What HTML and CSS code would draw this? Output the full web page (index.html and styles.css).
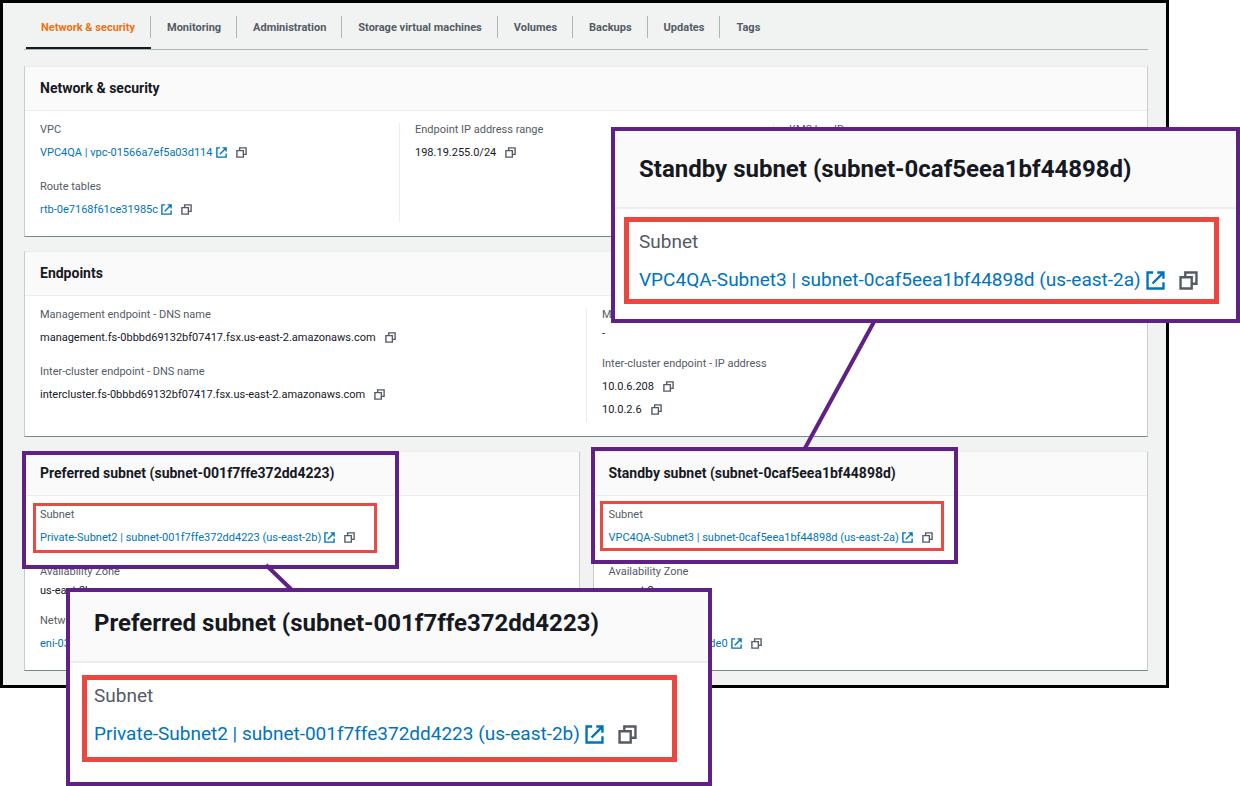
FILE: index.html
```html
<!DOCTYPE html>
<html lang="en">
<head>
<meta charset="utf-8">
<title>File system - Network &amp; security</title>
<link rel="stylesheet" href="styles.css">
</head>
<body>
<svg class="sprite" aria-hidden="true">
  <symbol id="ext" viewBox="0 0 16 16"><path d="M9.500 1.300h5.200v5.200M5.500 10.500l8.700-8.700M14.700 9.500v5.200H1.300V1.300H6" fill="none" stroke="currentColor" stroke-width="2"/></symbol>
  <symbol id="copy" viewBox="0 0 16 16"><path d="M1.300 5.300h9.400v9.400H1.300zM5.300 5V1.300h9.400v9.400H11" fill="none" stroke="currentColor" stroke-width="2"/></symbol>
</svg>
<div class="page">
  <main class="frame">
    <nav class="tabs" role="tablist">
      <button class="tab active" role="tab" aria-selected="true">Network &amp; security</button>
      <button class="tab" role="tab">Monitoring</button>
      <button class="tab" role="tab">Administration</button>
      <button class="tab" role="tab">Storage virtual machines</button>
      <button class="tab" role="tab">Volumes</button>
      <button class="tab" role="tab">Backups</button>
      <button class="tab" role="tab">Updates</button>
      <button class="tab" role="tab">Tags</button>
    </nav>

    <section class="card">
      <h2>Network &amp; security</h2>
      <div class="cols three">
        <dl>
          <div><dt>VPC</dt><dd><a href="#">VPC4QA | vpc-01566a7ef5a03d114<svg><use href="#ext"/></svg></a><button class="copy" aria-label="Copy"><svg><use href="#copy"/></svg></button></dd></div>
          <div><dt>Route tables</dt><dd><a href="#">rtb-0e7168f61ce31985c<svg><use href="#ext"/></svg></a><button class="copy" aria-label="Copy"><svg><use href="#copy"/></svg></button></dd></div>
        </dl>
        <dl>
          <div><dt>Endpoint IP address range</dt><dd>198.19.255.0/24<button class="copy" aria-label="Copy"><svg><use href="#copy"/></svg></button></dd></div>
        </dl>
        <dl>
          <div><dt>KMS key ID</dt></div>
        </dl>
      </div>
    </section>

    <section class="card">
      <h2>Endpoints</h2>
      <div class="cols two">
        <dl>
          <div><dt>Management endpoint - DNS name</dt><dd>management.fs-0bbbd69132bf07417.fsx.us-east-2.amazonaws.com<button class="copy" aria-label="Copy"><svg><use href="#copy"/></svg></button></dd></div>
          <div><dt>Inter-cluster endpoint - DNS name</dt><dd>intercluster.fs-0bbbd69132bf07417.fsx.us-east-2.amazonaws.com<button class="copy" aria-label="Copy"><svg><use href="#copy"/></svg></button></dd></div>
        </dl>
        <dl>
          <div><dt>Management endpoint - IP address</dt><dd class="plain">-</dd></div>
          <div><dt>Inter-cluster endpoint - IP address</dt><dd>10.0.6.208<button class="copy" aria-label="Copy"><svg><use href="#copy"/></svg></button></dd><dd>10.0.2.6<button class="copy" aria-label="Copy"><svg><use href="#copy"/></svg></button></dd></div>
        </dl>
      </div>
    </section>

    <div class="pair">
      <section class="card">
        <h2>Preferred subnet (subnet-001f7ffe372dd4223)</h2>
        <div class="cols">
          <dl>
            <div><dt>Subnet</dt><dd><a href="#">Private-Subnet2 | subnet-001f7ffe372dd4223 (us-east-2b)<svg><use href="#ext"/></svg></a><button class="copy" aria-label="Copy"><svg><use href="#copy"/></svg></button></dd></div>
            <div><dt>Availability Zone</dt><dd class="plain">us-east-2b</dd></div>
            <div><dt>Network interface</dt><dd><a href="#">eni-03</a></dd></div>
          </dl>
        </div>
      </section>
      <section class="card">
        <h2>Standby subnet (subnet-0caf5eea1bf44898d)</h2>
        <div class="cols">
          <dl>
            <div><dt>Subnet</dt><dd><a href="#">VPC4QA-Subnet3 | subnet-0caf5eea1bf44898d (us-east-2a)<svg><use href="#ext"/></svg></a><button class="copy" aria-label="Copy"><svg><use href="#copy"/></svg></button></dd></div>
            <div><dt>Availability Zone</dt><dd class="plain">us-east-2a</dd></div>
            <div><dt>Network interface</dt><dd><a href="#">eni-0a1b2c3d4e5f67de0<svg><use href="#ext"/></svg></a><button class="copy" aria-label="Copy"><svg><use href="#copy"/></svg></button></dd></div>
          </dl>
        </div>
      </section>
    </div>
  </main>

  <svg class="connectors" aria-hidden="true"><path d="M875 320L804 450M266 565L294 592" fill="none" stroke="#5f2187" stroke-width="4"/></svg>
  <div class="mark mark-preferred"><div class="ring"></div></div>
  <div class="mark mark-standby"><div class="ring"></div></div>

  <aside class="callout callout-standby">
    <h3>Standby subnet (subnet-0caf5eea1bf44898d)</h3>
    <div class="box">
      <p>Subnet</p>
      <div class="value"><a href="#">VPC4QA-Subnet3 | subnet-0caf5eea1bf44898d (us-east-2a)<svg><use href="#ext"/></svg></a><button class="copy" aria-label="Copy"><svg><use href="#copy"/></svg></button></div>
    </div>
  </aside>
  <aside class="callout callout-preferred">
    <h3>Preferred subnet (subnet-001f7ffe372dd4223)</h3>
    <div class="box">
      <p>Subnet</p>
      <div class="value"><a href="#">Private-Subnet2 | subnet-001f7ffe372dd4223 (us-east-2b)<svg><use href="#ext"/></svg></a><button class="copy" aria-label="Copy"><svg><use href="#copy"/></svg></button></div>
    </div>
  </aside>
</div>
</body>
</html>
```
FILE: styles.css
```css
* { box-sizing: border-box; }
body { margin: 0; background: #fff; color: #16191f; font: 11px/14px Roboto, "Noto Sans", sans-serif; }
h2, h3, p, dl, dd { margin: 0; }
button { border: 0; background: none; padding: 0; font: inherit; color: inherit; }
a { color: #0073bb; text-decoration: none; display: inline-flex; align-items: center; gap: 3px; }
.sprite { display: none; }
.page { position: relative; min-height: 100vh; padding-right: 71px; overflow: hidden; }
.frame { border: 3px solid #000; background: #f1f3f3; padding: 0 18px 14px 21px; display: flex; flex-direction: column; gap: 14px; }
.tabs { display: flex; height: 47px; margin-bottom: 2px; border-bottom: 1px solid #aab7b8; padding-left: 2px; }
.tab { padding: 4px 16px 0; font-weight: 700; color: #545b64; white-space: nowrap; }
.tab:first-child { padding-left: 15px; }
.tab:not(:last-child) { background: linear-gradient(#aab7b8, #aab7b8) right 13px / 1px 22px no-repeat; }
.tab.active { color: #ec7211; border-bottom: 2px solid #16191f; padding-top: 6px; }
.card { background: #fff; border: 1px solid #c8cecf; border-top-color: #eaeded; border-bottom-color: #79898b; }
.card h2 { height: 44px; padding: 0 15px; border-bottom: 1px solid #eaeded; background: #fafafa; font-size: 14px; line-height: 43px; font-weight: 700; white-space: nowrap; }
.cols { display: grid; padding: 12px 0 14px; }
.three { grid-template-columns: repeat(3, 1fr); }
.two { grid-template-columns: repeat(2, 1fr); }
dl { display: flex; flex-direction: column; gap: 16px; padding: 0 15px 1px; white-space: nowrap; }
dl + dl { border-left: 1px solid #eaeded; }
dt { color: #545b64; margin-bottom: 5px; }
dd { display: flex; align-items: center; height: 22px; }
dd + dd { margin-top: 1px; }
dd.plain { height: 14px; }
dd svg { width: 11px; height: 11px; display: block; margin-bottom: 2px; }
.copy { color: #545b64; margin-left: 9px; }
.pair { display: grid; grid-template-columns: 1fr 1fr; gap: 13px; }
.connectors { position: absolute; left: 0; top: 0; width: 100%; height: 100%; }
.mark { position: absolute; border: 4px solid #5f2187; }
.ring { position: absolute; border: 3px solid #e94b43; }
.mark-preferred { left: 22px; top: 451px; width: 377px; height: 118px; }
.mark-preferred .ring { left: 7px; top: 48px; width: 344px; height: 50px; }
.mark-standby { left: 591px; top: 447px; width: 367px; height: 117px; }
.mark-standby .ring { left: 5px; top: 50px; width: 344px; height: 50px; }
.callout { position: absolute; border: 4px solid #5f2187; background: #fff; white-space: nowrap; font-size: 19px; line-height: 24px; }
.callout-standby { left: 611px; top: 127px; width: 629px; height: 196px; }
.callout-preferred { left: 66px; top: 588px; width: 646px; height: 198px; }
.callout h3 { height: 78px; padding: 0 24px; line-height: 76px; font-size: 24px; font-weight: 700; background: #fafafa; border-bottom: 2px solid #eceeee; }
.callout-preferred h3 { height: 71px; line-height: 63px; }
.box { width: 595px; height: 87px; margin: 8px 9px; border: 5px solid #ea4740; padding: 8px 10px; }
.callout-preferred .box { margin: 12px; padding: 4px 7px; }
.box p { color: #545b64; }
.value { display: flex; align-items: center; margin-top: 14px; }
.value svg { width: 19px; height: 19px; display: block; }
.value a { gap: 5px; }
.value .copy { margin-left: 14px; }
```
